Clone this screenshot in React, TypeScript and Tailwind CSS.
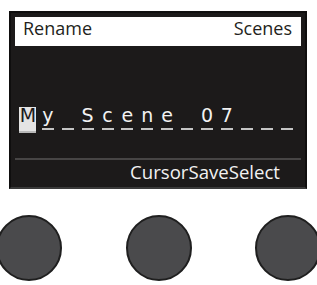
import React from "react";

const chars = ["M", "y", " ", "S", "c", "e", "n", "e", " ", "0", "7", " ", " ", " "];

export default function App() {
  return (
    <div className="w-[317px] h-[285px] bg-white overflow-hidden" style={{ fontFamily: '"Open Sans", sans-serif' }}>
      <div className="pt-[11px] pl-[9px]">
        <div className="w-[298px] h-[178px] bg-[#1c1a1a] border-2 border-[#0f0e0e] border-b-[#3a3a3a] p-[4px] flex flex-col">
          <div className="h-[29px] bg-white flex justify-between items-start px-[8px] pt-[1px] text-[18px] leading-[20px] text-[#231f20]">
            <span>Rename</span>
            <span className="mr-[1px]">Scenes</span>
          </div>
          <div className="mt-[61px] pl-[3px] flex">
            {chars.map((c, i) => (
              <div key={i} className="relative w-[19.9px] h-[26px] flex justify-center shrink-0">
                {i === 0 ? (
                  <div className="w-[17px] h-[26px] bg-[#e4e4e4] flex justify-center border-b-2 border-[#b8b8b8]">
                    <span className="block mt-[-2px] leading-[20px] text-[19px] text-[#1c1a1a]" style={{ fontFamily: '"DejaVu Sans", sans-serif' }}>
                      {c}
                    </span>
                  </div>
                ) : (
                  <>
                    <span className="block mt-[-2px] leading-[20px] text-[19px] text-[#f2f2f2] whitespace-pre" style={{ fontFamily: '"DejaVu Sans", sans-serif' }}>
                      {c}
                    </span>
                    <div className="absolute left-[4px] top-[21px] w-[12px] h-[2px] bg-[#c4c4c4]" />
                  </>
                )}
              </div>
            ))}
          </div>
          <div className="mt-[25px] h-[2px] bg-[#474545]" />
          <div className="mt-[2px] flex justify-end pr-[21px] text-[18.6px] leading-[20px] text-[#f2f2f2]">
            CursorSaveSelect
          </div>
        </div>
      </div>
      <div className="mt-[26px] ml-[-4px] w-[325px] flex justify-between">
        <div className="w-[66px] h-[66px] rounded-full bg-[#4a4a4c] border-2 border-[#1f1f1f]" />
        <div className="w-[66px] h-[66px] rounded-full bg-[#4a4a4c] border-2 border-[#1f1f1f]" />
        <div className="w-[66px] h-[66px] rounded-full bg-[#4a4a4c] border-2 border-[#1f1f1f]" />
      </div>
    </div>
  );
}
